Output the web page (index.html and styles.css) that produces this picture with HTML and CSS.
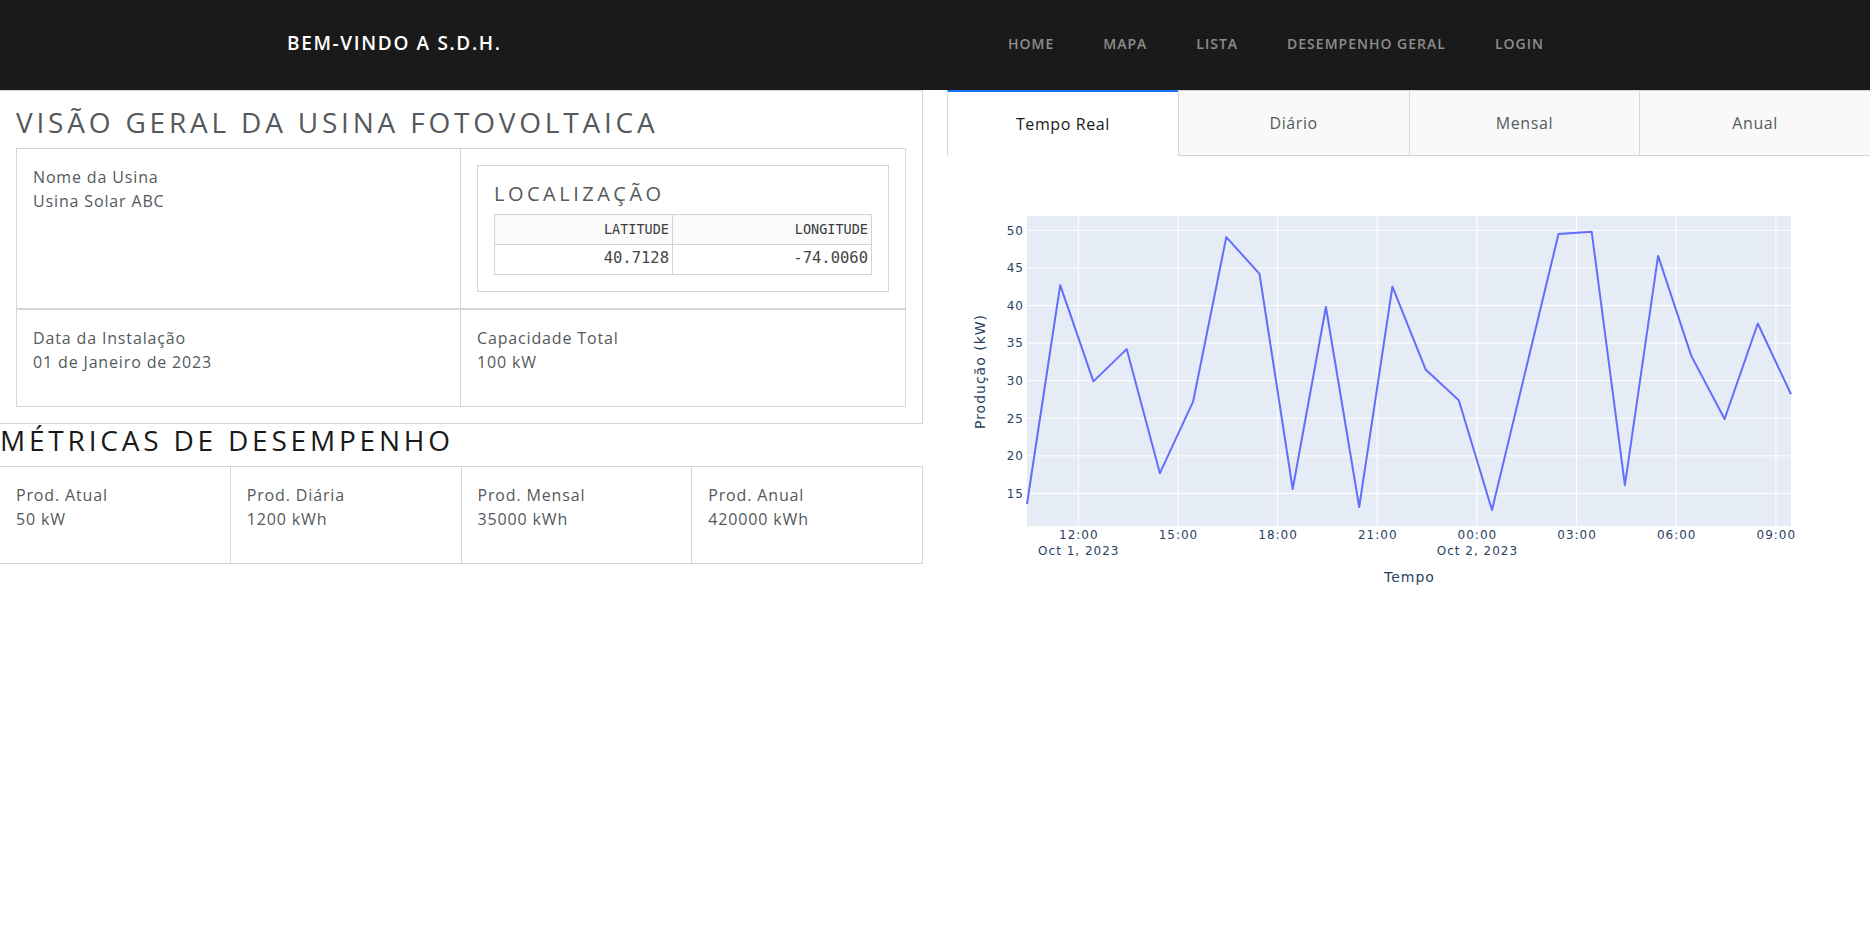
FILE: index.html
```html
<!DOCTYPE html>
<html lang="pt">
<head>
<meta charset="utf-8">
<title>S.D.H.</title>
<link rel="stylesheet" href="styles.css">
</head>
<body>
<nav class="navbar">
  <div class="nav-container">
    <div class="brand">BEM-VINDO A S.D.H.</div>
    <ul class="nav-links">
      <li>HOME</li>
      <li>MAPA</li>
      <li>LISTA</li>
      <li>DESEMPENHO GERAL</li>
      <li>LOGIN</li>
    </ul>
  </div>
</nav>
<main class="main">
  <section class="left-col">
    <div class="overview">
      <h3 class="title">Visão Geral da Usina Fotovoltaica</h3>
      <div class="info-grid">
        <div class="cell top left">
          <p>Nome da Usina<br>Usina Solar ABC</p>
        </div>
        <div class="cell top">
          <div class="loc-box">
            <h4 class="loc-title">Localização</h4>
            <table class="dash-table">
              <thead>
                <tr><th class="c1">LATITUDE</th><th class="c2">LONGITUDE</th></tr>
              </thead>
              <tbody>
                <tr><td class="c1">40.7128</td><td class="c2">-74.0060</td></tr>
              </tbody>
            </table>
          </div>
        </div>
        <div class="cell left">
          <p>Data da Instalação<br>01 de Janeiro de 2023</p>
        </div>
        <div class="cell">
          <p>Capacidade Total<br>100 kW</p>
        </div>
      </div>
    </div>
    <h3 class="title dark">Métricas de Desempenho</h3>
    <div class="metrics">
      <div class="metric"><p>Prod. Atual<br>50 kW</p></div>
      <div class="metric"><p>Prod. Diária<br>1200 kWh</p></div>
      <div class="metric"><p>Prod. Mensal<br>35000 kWh</p></div>
      <div class="metric"><p>Prod. Anual<br>420000 kWh</p></div>
    </div>
  </section>
  <section class="right-col">
    <div class="tabs">
      <div class="tab selected">Tempo Real</div>
      <div class="tab">Diário</div>
      <div class="tab">Mensal</div>
      <div class="tab">Anual</div>
    </div>
    <div class="graph">
      <svg class="chart" width="923" height="450" viewBox="0 0 923 450">
        <rect x="80" y="60" width="764" height="310" fill="#E5ECF6"/>
        <g class="grid">
          <line x1="131.3" y1="60" x2="131.3" y2="370"/>
          <line x1="230.95" y1="60" x2="230.95" y2="370"/>
          <line x1="330.6" y1="60" x2="330.6" y2="370"/>
          <line x1="430.25" y1="60" x2="430.25" y2="370"/>
          <line x1="529.9" y1="60" x2="529.9" y2="370"/>
          <line x1="629.55" y1="60" x2="629.55" y2="370"/>
          <line x1="729.2" y1="60" x2="729.2" y2="370"/>
          <line x1="828.85" y1="60" x2="828.85" y2="370"/>
          <line x1="80" y1="74.3" x2="844" y2="74.3"/>
          <line x1="80" y1="111.9" x2="844" y2="111.9"/>
          <line x1="80" y1="149.5" x2="844" y2="149.5"/>
          <line x1="80" y1="187.1" x2="844" y2="187.1"/>
          <line x1="80" y1="224.7" x2="844" y2="224.7"/>
          <line x1="80" y1="262.3" x2="844" y2="262.3"/>
          <line x1="80" y1="299.9" x2="844" y2="299.9"/>
          <line x1="80" y1="337.5" x2="844" y2="337.5"/>
        </g>
        <polyline class="trace" points="80,348 113.2,129.2 146.4,225.4 179.7,193.1 212.9,317.2 246.1,245.7 279.3,81.1 312.5,117.9 345.7,333 378.9,151 412.2,351 445.4,130.7 478.6,213.4 511.8,244.2 545,354 578.3,215.7 611.5,78 644.7,75.8 677.9,329.2 711.1,99.9 744.3,199.9 777.6,263 810.8,167.5 844,238.2"/>
        <g class="tick ytick">
          <text x="77" y="78.5">50</text>
          <text x="77" y="116.1">45</text>
          <text x="77" y="153.7">40</text>
          <text x="77" y="191.3">35</text>
          <text x="77" y="228.9">30</text>
          <text x="77" y="266.5">25</text>
          <text x="77" y="304.1">20</text>
          <text x="77" y="341.7">15</text>
        </g>
        <g class="tick xtick">
          <text x="131.8" y="382.5">12:00</text>
          <text x="231.45" y="382.5">15:00</text>
          <text x="331.1" y="382.5">18:00</text>
          <text x="430.75" y="382.5">21:00</text>
          <text x="530.4" y="382.5">00:00</text>
          <text x="630.05" y="382.5">03:00</text>
          <text x="729.7" y="382.5">06:00</text>
          <text x="829.35" y="382.5">09:00</text>
          <text x="131.8" y="399">Oct 1, 2023</text>
          <text x="530.4" y="399">Oct 2, 2023</text>
        </g>
        <text class="axis-title" x="462.5" y="426" text-anchor="middle">Tempo</text>
        <text class="axis-title" transform="translate(38,215.5) rotate(-90)" text-anchor="middle">Produção (kW)</text>
      </svg>
    </div>
  </section>
</main>
</body>
</html>
```

FILE: styles.css
```css
* { box-sizing: border-box; }

body {
  margin: 0;
  font-family: "Open Sans", "Noto Sans", sans-serif;
  font-size: 16px;
  line-height: 1.5;
  color: #55595c;
  background: #fff;
}

p { margin: 0 0 16px 0; letter-spacing: 0.85px; }

/* Navbar */
.navbar {
  background: #1a1a1a;
  height: 90px;
}
.nav-container {
  width: 1296px;
  margin: 0 auto;
  height: 100%;
  display: grid;
  grid-template-columns: 648px 648px;
  align-items: center;
  padding-bottom: 4px;
}
.brand {
  color: #fff;
  font-size: 19px;
  font-weight: 600;
  letter-spacing: 1.65px;
}
.nav-links {
  list-style: none;
  margin: 0;
  padding: 0 0 0 73px;
  display: flex;
  gap: 49px;
}
.nav-links li {
  color: rgba(255, 255, 255, 0.5);
  font-size: 14px;
  font-weight: 600;
  letter-spacing: 1px;
}

/* Main layout */
.main {
  display: grid;
  grid-template-columns: 923px 923px;
  column-gap: 24px;
}

.overview {
  border: 1px solid #d6d6d6;
  border-left: none;
  padding: 15px 16px 16px 16px;
}

.title {
  margin: 0 0 8px 0;
  font-size: 28px;
  font-weight: 400;
  line-height: 1.2;
  letter-spacing: 3.8px;
  text-transform: uppercase;
  color: #55595c;
}
.title.dark { color: #1a1a1a; margin-bottom: 9px; }

.info-grid {
  display: grid;
  grid-template-columns: 1fr 1fr;
  border: 1px solid #d6d6d6;
}
.cell { padding: 16px; }
.cell.left { border-right: 1px solid #d6d6d6; }
.cell.top { border-bottom: 2px solid #d6d6d6; }
.cell.top p { margin: 0; }

.loc-box {
  border: 1px solid #d6d6d6;
  padding: 16px;
}
.loc-title {
  margin: 0 0 8px 0;
  font-size: 20px;
  font-weight: 400;
  line-height: 1.2;
  letter-spacing: 3.5px;
  text-transform: uppercase;
  color: #55595c;
}

.dash-table {
  width: 100%;
  border-collapse: collapse;
  font-family: "DejaVu Sans Mono", monospace;
  color: rgb(60, 60, 60);
}
.dash-table th, .dash-table td {
  border: 1px solid #d3d3d3;
  height: 30px;
  padding: 0 3px 0 6px;
  text-align: right;
  font-weight: 400;
}
.dash-table th {
  background: #fafafa;
  font-size: 13.5px;
}
.dash-table td { font-size: 15.5px; color: rgb(70, 70, 70); }
.dash-table .c1 { width: 178px; }

/* Metrics */
.metrics {
  display: grid;
  grid-template-columns: repeat(4, 1fr);
  border-top: 1px solid #d6d6d6;
  border-bottom: 1px solid #d6d6d6;
}
.metric {
  padding: 16px;
  border-right: 1px solid #d6d6d6;
}

/* Tabs */
.tabs {
  display: flex;
  height: 66px;
}
.tab {
  flex: 1;
  display: flex;
  align-items: center;
  justify-content: center;
  background: #f9f9f9;
  border-top: 1px solid #d6d6d6;
  border-bottom: 1px solid #d6d6d6;
  border-left: 1px solid #d6d6d6;
  color: #55595c;
  letter-spacing: 0.6px;
}
.tab.selected {
  background: #fff;
  border-top: 2px solid #1975fa;
  border-bottom: none;
  color: #1a1a1a;
}

.graph { height: 450px; }
.chart { display: block; }
.grid line { stroke: #fff; stroke-width: 1; }
.trace { fill: none; stroke: #636efa; stroke-width: 2; stroke-linejoin: round; }
.tick {
  font-family: "DejaVu Sans", sans-serif;
  font-size: 12px;
  letter-spacing: 1px;
  fill: #2a3f5f;
}
.ytick text { text-anchor: end; }
.xtick text { text-anchor: middle; }
.axis-title {
  font-family: "DejaVu Sans", sans-serif;
  font-size: 14px;
  letter-spacing: 1px;
  fill: #2a3f5f;
}
```
